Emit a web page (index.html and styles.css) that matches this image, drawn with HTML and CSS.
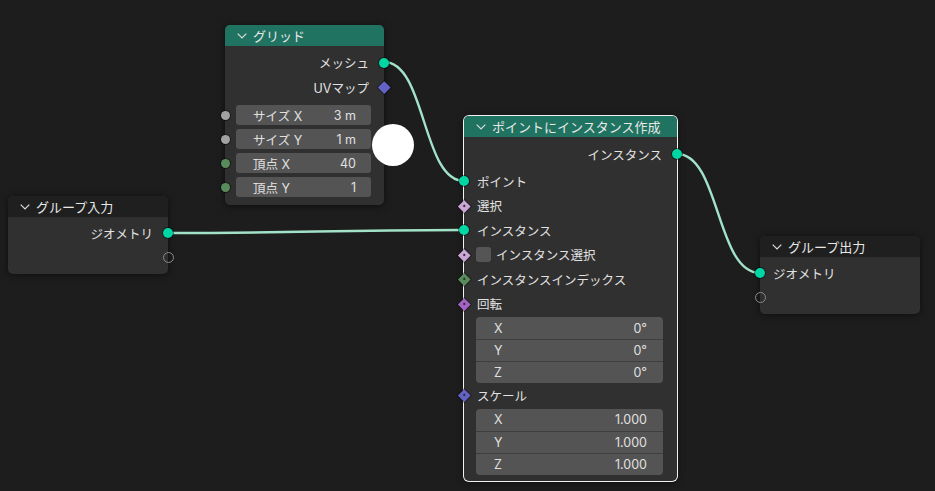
FILE: index.html
```html
<!DOCTYPE html>
<html lang="ja">
<head>
<meta charset="utf-8">
<link rel="stylesheet" href="styles.css">
</head>
<body>
<div class="canvas">
  <svg class="links" width="935" height="491" viewBox="0 0 935 491">
    <path d="M384 62 C426 62 422 181 464 181"/>
    <path d="M168 233 C316 233 316 230 464 230"/>
    <path d="M677 154 C720 154 716 273 760 273"/>
  </svg>

  <div class="node n-grid">
    <div class="head geo"><svg class="chev" width="10" height="6" viewBox="0 0 10 6"><polyline points="0.7,0.7 5,5 9.3,0.7"/></svg><span>グリッド</span></div>
    <div class="body">
      <div class="row out tall"><span>メッシュ</span><i class="sock r s-geo"></i></div>
      <div class="row out tall"><span>UVマップ</span><i class="dia r d-vec"></i></div>
      <div class="row frow first"><i class="sock l s-float"></i><div class="field"><span>サイズ X</span><span>3 m</span></div></div>
      <div class="row frow"><i class="sock l s-float"></i><div class="field"><span>サイズ Y</span><span>1 m</span></div></div>
      <div class="row frow"><i class="sock l s-int"></i><div class="field"><span>頂点 X</span><span>40</span></div></div>
      <div class="row frow"><i class="sock l s-int"></i><div class="field"><span>頂点 Y</span><span>1</span></div></div>
    </div>
  </div>

  <div class="cursor"></div>

  <div class="node n-gin">
    <div class="head dark"><svg class="chev" width="10" height="6" viewBox="0 0 10 6"><polyline points="0.7,0.7 5,5 9.3,0.7"/></svg><span>グループ入力</span></div>
    <div class="body">
      <div class="row out"><span>ジオメトリ</span><i class="sock r s-geo"></i></div>
      <div class="row out"><i class="sock r s-empty"></i></div>
    </div>
  </div>

  <div class="node n-inst sel">
    <div class="head geo"><svg class="chev" width="10" height="6" viewBox="0 0 10 6"><polyline points="0.7,0.7 5,5 9.3,0.7"/></svg><span>ポイントにインスタンス作成</span></div>
    <div class="body">
      <div class="row out"><span>インスタンス</span><i class="sock r s-geo"></i></div>
      <div class="row in gapt"><i class="sock l s-geo"></i><span>ポイント</span></div>
      <div class="row in"><i class="dia l d-bool"><b></b></i><span>選択</span></div>
      <div class="row in"><i class="sock l s-geo"></i><span>インスタンス</span></div>
      <div class="row in"><i class="dia l d-bool"><b></b></i><span class="check"></span><span>インスタンス選択</span></div>
      <div class="row in"><i class="dia l d-int"><b></b></i><span>インスタンスインデックス</span></div>
      <div class="row in"><i class="dia l d-rot"><b></b></i><span>回転</span></div>
      <div class="vec">
        <div class="vrow"><span>X</span><span>0°</span></div>
        <div class="vrow"><span>Y</span><span>0°</span></div>
        <div class="vrow"><span>Z</span><span>0°</span></div>
      </div>
      <div class="row in"><i class="dia l d-vec"><b></b></i><span>スケール</span></div>
      <div class="vec">
        <div class="vrow"><span>X</span><span>1.000</span></div>
        <div class="vrow"><span>Y</span><span>1.000</span></div>
        <div class="vrow"><span>Z</span><span>1.000</span></div>
      </div>
    </div>
  </div>

  <div class="node n-gout">
    <div class="head dark"><svg class="chev" width="10" height="6" viewBox="0 0 10 6"><polyline points="0.7,0.7 5,5 9.3,0.7"/></svg><span>グループ出力</span></div>
    <div class="body">
      <div class="row in"><i class="sock l s-geo"></i><span>ジオメトリ</span></div>
      <div class="row in"><i class="sock l s-empty"></i></div>
    </div>
  </div>
</div>
</body>
</html>
```

FILE: styles.css
```css
* { box-sizing: border-box; }
html, body { margin: 0; padding: 0; }
body {
  background: #1d1d1d;
  font-family: "Inter", "Noto Sans CJK JP", sans-serif;
  font-size: 12.5px;
  color: #e2e2e2;
}
.canvas {
  position: relative;
  width: 935px;
  height: 491px;
  overflow: hidden;
  background: #1d1d1d;
}
.links { position: absolute; left: 0; top: 0; }
.links path { fill: none; stroke: #a2e2c9; stroke-width: 2.4; }

.node {
  position: absolute;
  background: #303030;
  border-radius: 5px;
  box-shadow: 0 1px 7px rgba(0, 0, 0, 0.55);
}
.node.sel { box-shadow: 0 0 0 1px #f2f2f2, 0 1px 7px rgba(0, 0, 0, 0.55); }

.n-grid { left: 225px; top: 25px; width: 159px; }
.n-gin { left: 8px; top: 196px; width: 160px; }
.n-inst { left: 464px; top: 116px; width: 213px; }
.n-gout { left: 760px; top: 236px; width: 160px; }

.head {
  height: 21px;
  display: flex;
  align-items: center;
  padding-left: 12px;
  border-radius: 5px 5px 0 0;
  color: #e8e8e8;
  font-size: 13px;
}
.head.geo { background: #1f7360; }
.head.dark { background: #1f1f1f; }
.chev { margin-right: 6px; flex: none; }
.chev polyline { fill: none; stroke: #dcdcdc; stroke-width: 1.2; }

.body { padding: 4px 0 5px; }
.n-inst .body { padding: 5px 0 6px; }
.n-grid .body { padding: 4px 0 6px; }

.row {
  position: relative;
  height: 24px;
  display: flex;
  align-items: center;
  padding: 0 15px 0 13px;
  white-space: nowrap;
}
.row.tall { height: 25px; }
.row.out { justify-content: flex-end; }
.n-inst .row.in { height: 24.5px; }
.row.gapt { margin-top: 3px; }
.row.frow { padding: 0 13px 0 11px; }
.row.frow.first { margin-top: 3px; }

.field {
  flex: 1;
  height: 20px;
  background: #545454;
  border-radius: 3px;
  display: flex;
  align-items: center;
  justify-content: space-between;
  padding: 0 15px 0 17px;
  color: #e0e0e0;
}

.check {
  width: 15px;
  height: 15px;
  background: #555555;
  border-radius: 3px;
  margin-right: 5px;
  margin-left: -1px;
}

.vec {
  margin: 1px 14px 0 12px;
  background: #545454;
  border-radius: 4px;
  overflow: hidden;
}
.vrow {
  height: 22px;
  display: flex;
  align-items: center;
  justify-content: space-between;
  padding: 0 16px 0 18px;
  color: #e0e0e0;
}
.vrow + .vrow { border-top: 1px solid #3e3e3e; }

.sock {
  position: absolute;
  top: 50%;
  width: 10px;
  height: 10px;
  margin-top: -5px;
  border-radius: 50%;
  box-shadow: 0 0 0 1px rgba(0, 0, 0, 0.45);
}
.sock.l { left: -5px; }
.sock.r { right: -5px; }
.s-geo { background: #00d6a3; }
.s-float { background: #a1a1a1; width: 9px; height: 9px; margin-top: -4.5px; }
.s-float.l { left: -4.5px; }
.s-int { background: #598c5c; width: 9px; height: 9px; margin-top: -4.5px; }
.s-int.l { left: -4.5px; }
.s-empty {
  width: 11px;
  height: 11px;
  margin-top: -5.5px;
  background: transparent;
  border: 1.5px solid #8a8a8a;
  box-shadow: none;
}
.s-empty.l { left: -5.5px; }
.s-empty.r { right: -5.5px; }

.dia {
  position: absolute;
  top: 50%;
  width: 8.5px;
  height: 8.5px;
  margin-top: -4.25px;
  transform: rotate(45deg);
  display: flex;
  align-items: center;
  justify-content: center;
  box-shadow: 0 0 0 1px rgba(0, 0, 0, 0.35);
}
.dia.l { left: -4.25px; }
.dia.r { right: -4.25px; }
.dia b { width: 2px; height: 2px; background: #2a2a2a; }
.d-vec { background: #6363c7; }
.d-bool { background: #cca6d6; }
.d-int { background: #598c5c; }
.d-rot { background: #a663c7; }

.cursor {
  position: absolute;
  left: 372px;
  top: 124px;
  width: 42px;
  height: 42px;
  border-radius: 50%;
  background: #ffffff;
}
```
